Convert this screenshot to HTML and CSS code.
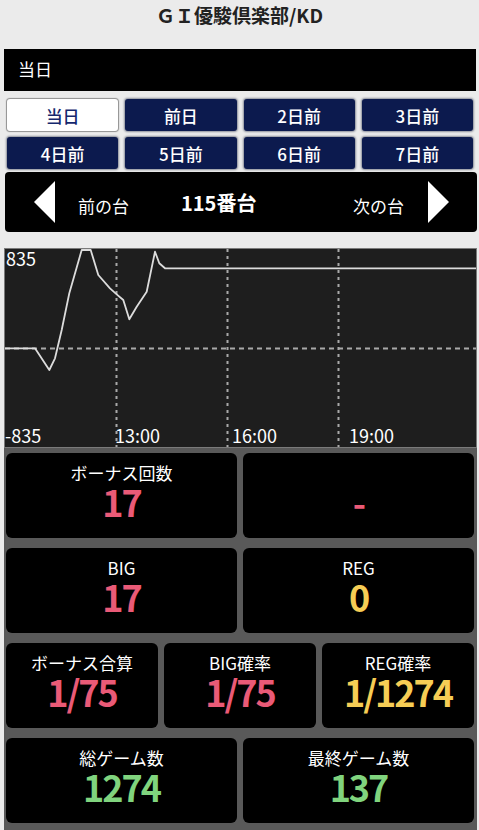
FILE: index.html
```html
<!DOCTYPE html>
<html lang="ja">
<head>
    <meta charset="UTF-8">
    <meta name="viewport" content="width=device-width, initial-scale=1.0">
    <title>ＧＩ優駿倶楽部/KD</title>
    <link rel="stylesheet" href="styles.css">
</head>
<body>
    <h1 class="shop-title">ＧＩ優駿倶楽部/KD</h1>

    <div class="day-bar">当日</div>

    <div class="day-tabs">
        <button class="day-btn active">当日</button>
        <button class="day-btn">前日</button>
        <button class="day-btn">2日前</button>
        <button class="day-btn">3日前</button>
        <button class="day-btn">4日前</button>
        <button class="day-btn">5日前</button>
        <button class="day-btn">6日前</button>
        <button class="day-btn">7日前</button>
    </div>

    <div class="machine-nav">
        <a class="nav-prev" href="#"><span class="arrow-left"></span>前の台</a>
        <span class="machine-no">115番台</span>
        <a class="nav-next" href="#">次の台<span class="arrow-right"></span></a>
    </div>

    <div class="graph">
        <svg width="471" height="198" viewBox="0 0 471 198">
            <g stroke="#a9a9a9" stroke-width="2" fill="none">
                <line x1="0" y1="99.5" x2="471" y2="99.5" stroke-dasharray="5 4"/>
                <line x1="111.5" y1="0" x2="111.5" y2="198" stroke-dasharray="3 4"/>
                <line x1="222.5" y1="0" x2="222.5" y2="198" stroke-dasharray="3 4"/>
                <line x1="333.5" y1="0" x2="333.5" y2="198" stroke-dasharray="3 4"/>
            </g>
            <polyline fill="none" stroke="#dcdcdc" stroke-width="1.8" stroke-linejoin="round"
                points="0,99.3 30,99.3 44.3,121 50,109.3 56.7,81 64.3,44.3 76.7,1 85.7,1 93.3,26 105,39.3 111.7,45.3 118.3,51 124.3,70.3 131.7,57.7 141.7,42.7 150,2.7 154.3,14.3 160,19.3 471,19.3"/>
            <g class="graph-label">
                <text x="1" y="17">835</text>
                <text x="0" y="194">-835</text>
                <text x="110" y="194">13:00</text>
                <text x="227" y="194">16:00</text>
                <text x="344" y="194">19:00</text>
            </g>
        </svg>
    </div>

    <div class="stats">
        <div class="stat-row two">
            <div class="stat-card">
                <div class="stat-label">ボーナス回数</div>
                <div class="stat-value pink">17</div>
            </div>
            <div class="stat-card">
                <div class="stat-label">&nbsp;</div>
                <div class="stat-value pink">-</div>
            </div>
        </div>
        <div class="stat-row two">
            <div class="stat-card">
                <div class="stat-label">BIG</div>
                <div class="stat-value pink">17</div>
            </div>
            <div class="stat-card">
                <div class="stat-label">REG</div>
                <div class="stat-value yellow">0</div>
            </div>
        </div>
        <div class="stat-row three">
            <div class="stat-card">
                <div class="stat-label">ボーナス合算</div>
                <div class="stat-value pink">1/75</div>
            </div>
            <div class="stat-card">
                <div class="stat-label">BIG確率</div>
                <div class="stat-value pink">1/75</div>
            </div>
            <div class="stat-card">
                <div class="stat-label">REG確率</div>
                <div class="stat-value yellow">1/1274</div>
            </div>
        </div>
        <div class="stat-row two">
            <div class="stat-card">
                <div class="stat-label">総ゲーム数</div>
                <div class="stat-value green">1274</div>
            </div>
            <div class="stat-card">
                <div class="stat-label">最終ゲーム数</div>
                <div class="stat-value green">137</div>
            </div>
        </div>
    </div>
</body>
</html>
```

FILE: styles.css
```css
/* Base */
body {
    margin: 0;
    background: #ebebeb;
    font-family: "Noto Sans CJK JP", "Noto Sans", sans-serif;
    color: #fff;
    overflow: hidden;
}

/* Shop title */
.shop-title {
    margin: 0;
    height: 30px;
    padding-top: 2px;
    font-size: 19px;
    font-weight: bold;
    line-height: 26px;
    text-align: center;
    color: #222;
}

/* Selected day bar */
.day-bar {
    margin: 17px 3px 0 4px;
    height: 42px;
    padding-left: 14px;
    background: #000;
    font-size: 17px;
    line-height: 40px;
}

/* Day tabs */
.day-tabs {
    display: grid;
    grid-template-columns: repeat(4, 1fr);
    gap: 6px 7px;
    margin: 8px 6px 0 7px;
}

.day-btn {
    height: 32px;
    padding: 0;
    border: none;
    border-radius: 3px;
    background: #0c1a4e;
    color: #fff;
    font-family: inherit;
    font-size: 17px;
    font-weight: 500;
    box-shadow: 0 0 2px 1px #8a8d99;
}

.day-btn.active {
    background: #fff;
    color: #15286e;
    box-shadow: 0 0 1px 1px #8f8f8f;
}

/* Machine navigation */
.machine-nav {
    display: flex;
    align-items: center;
    margin: 3px 2px 0 5px;
    height: 60px;
    padding: 0 28px 0 29px;
    background: #000;
    border-radius: 4px;
    font-size: 17px;
}

.machine-nav a {
    display: flex;
    align-items: center;
    color: #fff;
    text-decoration: none;
    padding-top: 6px;
}

.arrow-left,
.arrow-right {
    width: 0;
    height: 0;
    border-top: 21px solid transparent;
    border-bottom: 21px solid transparent;
    margin-top: -6px;
}

.arrow-left {
    border-right: 21px solid #fff;
    margin-right: 23px;
}

.arrow-right {
    border-left: 21px solid #fff;
    margin-left: 24px;
}

.machine-no {
    margin-left: 52px;
    margin-right: auto;
    font-size: 20px;
    font-weight: bold;
}

/* Graph */
.graph {
    margin: 16px 2px 0 4px;
    height: 198px;
    background: #1e1e1e;
    border: 1px solid #7a7a7a;
}

.graph svg {
    display: block;
}

.graph-label text {
    fill: #fff;
    font-size: 18px;
    font-family: "Noto Sans CJK JP", "Noto Sans", sans-serif;
}

/* Stats */
.stats {
    margin: 0 2px 0 4px;
    padding: 5px 3px 10px 2px;
    background: #595959;
}

.stat-row {
    display: grid;
    gap: 6px;
    margin-bottom: 10px;
}

.stat-row.two {
    grid-template-columns: 1fr 1fr;
}

.stat-row.three {
    grid-template-columns: 1fr 1fr 1fr;
    margin-top: 2px;
}

.stat-card {
    height: 85px;
    padding-top: 10px;
    box-sizing: border-box;
    background: #000;
    border-radius: 6px;
    text-align: center;
}

.stat-label {
    font-size: 17px;
    line-height: 20px;
}

.stat-value {
    font-size: 36px;
    font-weight: bold;
    letter-spacing: -2px;
    line-height: 36px;
}

.pink {
    color: #ea5a77;
}

.yellow {
    color: #f6cd55;
}

.green {
    color: #80d47e;
}
```
